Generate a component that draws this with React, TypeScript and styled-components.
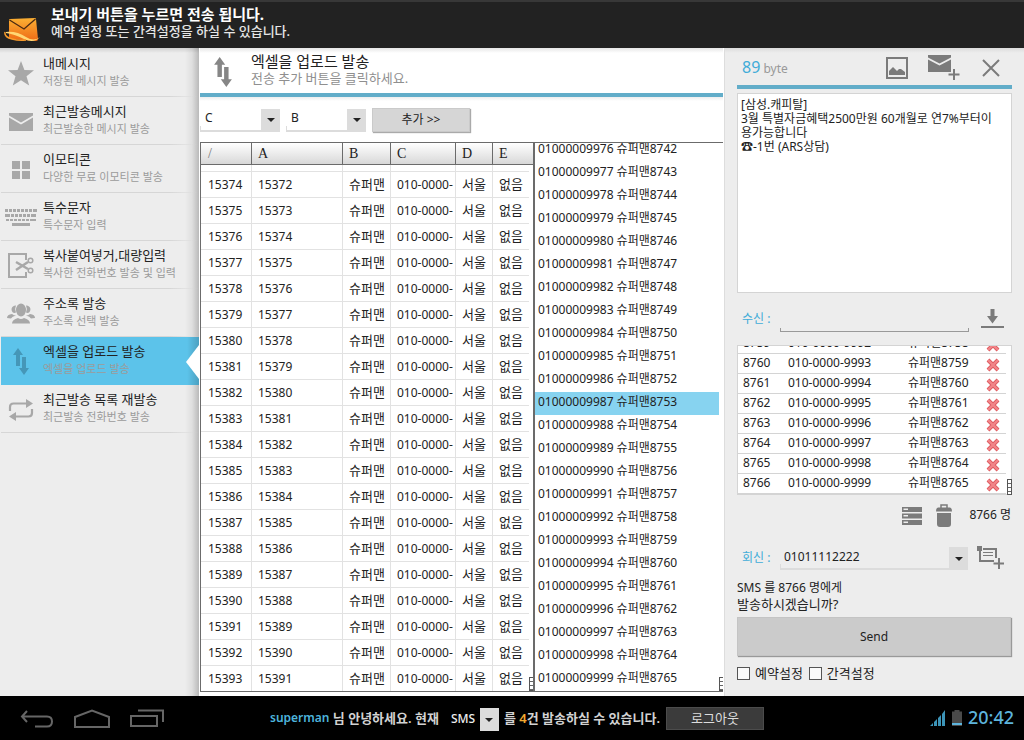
import React from 'react';
import styled, { createGlobalStyle, css } from 'styled-components';

const GlobalStyle = createGlobalStyle`
  * { box-sizing: border-box; }
  html, body { margin: 0; }
  body, button, input, select, textarea {
    font-family: "Noto Sans", "Noto Sans CJK KR", sans-serif;
    font-size: 12px;
    color: #222;
  }
  button { border: 0; padding: 0; background: none; cursor: pointer; }
  svg { display: block; flex: none; }
`;

const accent = '#62adc9';
const blueText = '#41acd8';
const iconGray = '#7b7b7b';

const Screen = styled.div`
  display: flex;
  flex-direction: column;
  min-height: 100vh;
  background: #ededed;
`;

const TopBar = styled.header`
  display: flex;
  align-items: center;
  gap: 10px;
  height: 48px;
  padding: 0 4px;
  background: #222;
  border-top: 2px solid #383838;
  color: #fff;
`;

const TopLogo = styled.span`
  padding-top: 10px;
`;

const TopTitle = styled.h1`
  margin: 0;
  font-size: 15px;
  line-height: 18px;
  font-weight: 700;
`;

const TopSubtitle = styled.p`
  margin: 0;
  padding-bottom: 6px;
  font-size: 13px;
  line-height: 16px;
  font-weight: 500;
  color: #e6e6e6;
`;

const Body = styled.div`
  display: flex;
  flex: 1;
`;

const Sidebar = styled.nav`
  flex: 0 0 199px;
  padding: 1px 0 0 1px;
  background:
    linear-gradient(to right, transparent, rgba(0, 0, 0, 0.06) 50%, rgba(0, 0, 0, 0.22)) right / 14px 100% no-repeat,
    linear-gradient(to bottom, rgba(0, 0, 0, 0.12), transparent) top / 100% 5px no-repeat,
    #ededed;
`;

const MenuItem = styled.a<{ $active?: boolean }>`
  position: relative;
  display: flex;
  align-items: center;
  height: 48px;
  padding-bottom: 1px;
  background: linear-gradient(to right, #d6d6d6 85%, transparent) left bottom / 100% 1px no-repeat;
  text-decoration: none;
  color: #222;
  ${(p) =>
    p.$active &&
    css`
      background: linear-gradient(to right, transparent, rgba(0, 0, 0, 0.18)) right / 12px 100% no-repeat, #5cc3ea;
      &::after {
        content: '';
        position: absolute;
        right: 0;
        top: 8px;
        border: 17px solid transparent;
        border-left-width: 0;
        border-right: 13px solid #fff;
      }
    `}
`;

const MenuIcon = styled.span<{ $active?: boolean }>`
  display: flex;
  justify-content: center;
  width: 40px;
  padding-top: 2px;
  margin-right: 2px;
  color: ${(p) => (p.$active ? '#4597b8' : '#a8a8a8')};
`;

const MenuTitle = styled.div`
  font-size: 13px;
  line-height: 17px;
`;

const MenuNote = styled.div`
  padding-bottom: 2px;
  font-size: 11px;
  line-height: 17px;
  color: #9b9b9b;
`;

const Main = styled.main`
  flex: 1;
  min-width: 0;
  padding: 0 1px 4px;
  background: #fff;
  border-right: 1px solid #ddd;
`;

const MainHead = styled.div`
  display: flex;
  gap: 19px;
  height: 49px;
  padding-left: 14px;
  border-bottom: 4px solid ${accent};
  background: linear-gradient(to bottom, #e6e6e6, #fff 5px);
`;

const MainIcon = styled.span`
  padding-top: 9px;
  color: #868686;
`;

const MainTitle = styled.h2`
  margin: 0;
  padding-top: 4px;
  font-size: 15px;
  line-height: 18px;
  font-weight: 400;
`;

const MainNote = styled.p`
  margin: 0;
  font-size: 13px;
  line-height: 17px;
  color: #8f8f8f;
`;

const Controls = styled.div`
  display: flex;
  align-items: center;
  gap: 6px;
  height: 45px;
  background: linear-gradient(to bottom, #eee, #fff 4px);
`;

const SelectBox = styled.span<{ $dark?: boolean; $wide?: boolean }>`
  position: relative;
  display: block;
  width: ${(p) => (p.$dark ? '48px' : '80px')};
  ${(p) =>
    p.$wide &&
    css`
      width: auto;
      flex: 1;
    `}
  height: 24px;

  select {
    display: block;
    width: 100%;
    height: 24px;
    padding: 0 20px 2px ${(p) => (p.$dark ? '0' : p.$wide ? '4px' : '5px')};
    appearance: none;
    border: 0;
    border-radius: 0;
    border-bottom: ${(p) => (p.$dark ? '0' : '2px solid #dcdcdc')};
    background: ${(p) => (p.$dark ? 'none' : 'linear-gradient(#dcdcdc, #dcdcdc) left bottom / 1px 4px no-repeat')};
    color: ${(p) => (p.$dark ? '#eee' : '#222')};
    font-weight: ${(p) => (p.$dark ? 500 : 400)};
    outline: none;
  }
`;

const SelectArrow = styled.span`
  position: absolute;
  right: 0;
  top: 1px;
  bottom: 0;
  display: flex;
  align-items: center;
  justify-content: center;
  width: 19px;
  background: #dcdcdc;
  pointer-events: none;
  &::after {
    content: '';
    border: 4px solid transparent;
    border-top-color: #222;
    border-bottom-width: 0;
  }
`;

const AddButton = styled.button`
  width: 98px;
  height: 24px;
  padding-bottom: 2px;
  background: #d6d6d6;
  border: 1px solid #cacaca;
  box-shadow: 1px 1px 1px #aaa;
`;

const Panes = styled.div`
  display: flex;
  height: 550px;
  border: 1px solid #6b6b6b;
  border-right: 0;
`;

const SheetPane = styled.div`
  position: relative;
  flex: 0 0 334px;
  overflow: hidden;
  border-right: 2px solid #6b6b6b;
`;

const Sheet = styled.table`
  width: 332px;
  table-layout: fixed;
  border-collapse: separate;
  border-spacing: 0;

  th {
    height: 22px;
    padding: 0 0 0 6px;
    text-align: left;
    font-family: "Liberation Serif", serif;
    font-size: 14px;
    font-weight: 400;
    line-height: 16px;
    background: linear-gradient(to bottom, #fff, #d8d8d8);
    border-right: 1px solid #6b6b6b;
    border-bottom: 1px solid #6b6b6b;
  }
  th:last-child { border-right: 0; }
  td {
    height: 26px;
    padding: 0 0 0 6px;
    overflow: hidden;
    white-space: nowrap;
    line-height: 16px;
    border-right: 1px solid #e2e2e2;
    border-bottom: 1px solid #e2e2e2;
  }
  th:first-child, td:first-child { padding-left: 7px; }
  th:first-child { color: #777; }
  td:last-child { border-right: 0; }
`;

const GapRow = styled.tr`
  && td { height: 7px; line-height: 1px; }
`;

const HangulCell = styled.td`
  && { padding-bottom: 2px; }
  font-size: 13px;
`;

const Track = styled.span`
  position: absolute;
  top: 22px;
  right: 0;
  bottom: 0;
  width: 4px;
  background: #fff;
`;

const PickPane = styled.div`
  position: relative;
  display: flex;
  flex: 1;
  flex-direction: column;
  justify-content: flex-end;
  overflow: hidden;
`;

const PickList = styled.ul`
  margin: 0;
  padding: 0 4px 0 0;
  list-style: none;
`;

const PickRow = styled.li<{ $on?: boolean }>`
  height: 23px;
  padding-left: 3px;
  line-height: 20px;
  white-space: nowrap;
  background: ${(p) => (p.$on ? '#87d3f0' : 'transparent')};
`;

const Grip = styled.span`
  position: absolute;
  right: 0;
  bottom: 0;
  width: 4px;
  height: 14px;
  border: 1px solid #555;
  border-right: 0;
  background: repeating-linear-gradient(to bottom, #fff 0 3px, #666 3px 4px);
`;

const Compose = styled.aside`
  display: flex;
  flex: 0 0 299px;
  flex-direction: column;
  padding: 0 12px;
  background: linear-gradient(to bottom, #dcdcdc, #ededed 5px);
`;

const ComposeHead = styled.div`
  display: flex;
  align-items: center;
  height: 41px;
  padding: 2px 12px 0 5px;
  border-bottom: 4px solid ${accent};
  color: ${iconGray};
`;

const ByteCount = styled.div`
  flex: 1;
  font-size: 12px;
  line-height: 24px;
  color: #999;
  strong {
    font-size: 16px;
    font-weight: 400;
    color: ${blueText};
  }
`;

const IconButton = styled.button<{ $gap?: number }>`
  margin-left: ${(p) => p.$gap ?? 0}px;
  color: ${iconGray};
`;

const Message = styled.textarea`
  display: block;
  width: 100%;
  height: 200px;
  margin-top: 4px;
  padding: 4px 0 0 3px;
  border: 1px solid #d4d4d4;
  border-radius: 0;
  background: #fff;
  line-height: 14px;
  white-space: pre-wrap;
  resize: none;
  overflow: hidden;
  outline: none;
`;

const FieldRow = styled.div<{ $tall?: boolean }>`
  display: flex;
  align-items: center;
  height: ${(p) => (p.$tall ? '52px' : '24px')};
  padding: 0 8px 0 5px;
`;

const FieldLabel = styled.label`
  flex: 0 0 38px;
  padding-bottom: 2px;
  font-size: 12px;
  color: ${blueText};
`;

const PhoneInput = styled.input`
  flex: 1;
  min-width: 0;
  height: 20px;
  margin-top: 6px;
  padding: 0 4px;
  border: 0;
  border-bottom: 1px solid #999;
  outline: none;
  background:
    linear-gradient(#999, #999) left bottom / 1px 3px no-repeat,
    linear-gradient(#999, #999) right bottom / 1px 3px no-repeat;
`;

const Recipients = styled.div`
  position: relative;
`;

const RecipientClip = styled.div`
  display: flex;
  flex-direction: column;
  justify-content: flex-end;
  height: 150px;
  overflow: hidden;
  border: 1px solid #d4d4d4;
  background: #fff;
`;

const RecipientTable = styled.table`
  flex: none;
  width: calc(100% - 5px);
  table-layout: fixed;
  border-collapse: separate;
  border-spacing: 0;
  td {
    height: 20px;
    padding: 0 0 2px 5px;
    line-height: 16px;
    white-space: nowrap;
    border-bottom: 1px solid #d4d4d4;
  }
  td:last-child { padding: 3px 0 0 2px; }
  button { display: block; }
`;

const RecipientGrip = styled(Grip)`
  width: 5px;
  height: 16px;
  border-right: 1px solid #555;
`;

const Actions = styled.div`
  display: flex;
  align-items: center;
  justify-content: flex-end;
  gap: 14px;
  height: 41px;
  margin-bottom: 10px;
`;

const Count = styled.span`
  padding: 0 1px 2px 3px;
  line-height: 16px;
`;

const Ask = styled.p`
  margin: 10px 0 5px;
  line-height: 16px;
`;

const AskLine = styled.span<{ $large?: boolean }>`
  display: block;
  font-size: ${(p) => (p.$large ? '13px' : '12px')};
`;

const SendButton = styled.button`
  height: 39px;
  margin-right: 1px;
  background: #cbcbcb;
  border: 1px solid #c4c4c4;
  box-shadow: 1px 1px 1px #999;
`;

const Options = styled.div`
  display: flex;
  gap: 6px;
  padding-top: 9px;
`;

const Option = styled.label`
  display: flex;
  align-items: center;
  gap: 5px;
  font-size: 13px;
  line-height: 16px;
  input {
    appearance: none;
    width: 13px;
    height: 13px;
    margin: 0;
    border: 1px solid #555;
    background: #fafafa;
  }
`;

const Footer = styled.footer`
  display: grid;
  grid-template-columns: 1fr auto 1fr;
  align-items: center;
  height: 44px;
  padding: 0 10px 0 20px;
  background: #000;
`;

const NavButtons = styled.div`
  display: flex;
  gap: 20px;
  button { color: #666; }
`;

const Greeting = styled.div`
  display: flex;
  align-items: center;
  font-size: 13px;
  font-weight: 600;
  line-height: 20px;
  color: #d2d2d2;
  white-space: pre;
`;

const UserName = styled.span`
  font-size: 12px;
  color: #4db4dc;
`;

const Quota = styled.span`
  color: #f0a830;
`;

const GreetingSelect = styled.span`
  margin: 2px 5px 0 12px;
`;

const LogoutButton = styled.button`
  width: 98px;
  height: 23px;
  margin-left: 6px;
  background: #3b3b3b;
  border: 1px solid #4c4c4c;
  font-size: 13px;
  line-height: 18px;
  color: #ddd;
`;

const Status = styled.div`
  display: flex;
  align-items: center;
  justify-content: flex-end;
  gap: 6px;
`;

const Clock = styled.time`
  padding-bottom: 2px;
  font-size: 18px;
  line-height: 24px;
  font-weight: 500;
  color: #5db4dc;
`;

const svg = (w: number, h: number, body: React.ReactNode) => (
  <svg width={w} height={h} viewBox={`0 0 ${w} ${h}`} fill="currentColor" aria-hidden="true">
    {body}
  </svg>
);

const Logo = () => (
  <svg width="37" height="27" viewBox="0 0 37 27" aria-hidden="true">
    <defs>
      <linearGradient id="envelope" x1="0" y1="0" x2="0" y2="1">
        <stop offset="0" stopColor="#fbb033" />
        <stop offset="1" stopColor="#ee6a16" />
      </linearGradient>
    </defs>
    <path d="M5 3 Q5 2 6 2 L31 1 Q32 1 32 2 L34 22 Q34 24 32 24 L7 22 Q5 22 5 20Z" fill="url(#envelope)" />
    <path d="M5.500 3 L20 12 L31.500 2" fill="none" stroke="#4a2a12" strokeWidth="1.300" />
    <path d="M2 15 Q13 14 22 20 Q30 25 36 20 Q30 27 20 22 Q10 17 2 16Z" fill="#ffd774" />
    <path d="M1 15 Q0 20 8 22 Q15 24 22 23" fill="none" stroke="#f79a2a" strokeWidth="1.500" />
  </svg>
);

const Star = () =>
  svg(26, 25, <path d="M13 0 L16.400 9 L26 9.300 L18.500 15.300 L21.200 24.500 L13 19.200 L4.800 24.500 L7.500 15.300 L0 9.300 L9.600 9Z" />);

const Envelope = () =>
  svg(24, 18, <><path d="M0 0H24V2.500L12 9.500L0 2.500Z" /><path d="M0 4.500L12 11.500L24 4.500V18H0Z" /></>);

const Tiles = () =>
  svg(18, 18, <><path d="M0 0h8v8H0zM10 0h8v8h-8zM0 10h8v8H0zM10 10h8v8h-8z" /></>);

const Keys = () =>
  svg(
    32,
    18,
    <>
      {[0, 1, 2, 3, 4, 5, 6].map((i) => <rect key={`a${i}`} x={i * 4} y="0" width="3" height="3" />)}
      <rect x="28" y="0" width="4" height="3" />
      <rect x="0" y="5" width="5" height="3" />
      {[0, 1, 2, 3, 4].map((i) => <rect key={`b${i}`} x={6 + i * 4} y="5" width="3" height="3" />)}
      <rect x="26" y="5" width="5" height="3" />
      {[0, 1, 2, 3, 4, 5, 6].map((i) => <rect key={`c${i}`} x={1 + i * 4} y="10" width="3" height="2" />)}
      <rect x="28" y="10" width="3" height="2" />
      <rect x="7" y="14" width="18" height="3" />
    </>,
  );

const Scissors = () =>
  svg(
    26,
    26,
    <g fill="none" stroke="currentColor">
      <path d="M18 7V1H1V24H18V19" strokeWidth="2" />
      <path d="M8 9L20 16M8 17L20 9" strokeWidth="2.500" />
      <circle cx="22.500" cy="7.500" r="2.300" strokeWidth="1.500" />
      <circle cx="22.500" cy="17.500" r="2.300" strokeWidth="1.500" />
    </g>,
  );

const Group = () =>
  svg(
    28,
    22,
    <>
      <path d="M6 3.500a4 4 0 0 1 3-1 8 8 0 0 0 0 7c-4 2-6-4-3-6zM22 3.500a4 4 0 0 0-3-1 8 8 0 0 1 0 7c4 2 6-4 3-6z" />
      <ellipse cx="14" cy="7" rx="5" ry="6.500" />
      <path d="M5 20.500q0-4 6-5.500q3 2 6 0q6 1.500 6 5.500zM0 15q0-3.500 5-4q2 1.500 4 1.500q-4 1-5 3zM28 15q0-3.500-5-4q-2 1.500-4 1.500q4 1 5 3z" />
    </>,
  );

const UpDown = ({ size = 'small' }: { size?: 'small' | 'large' }) => {
  const large = size === 'large';
  return (
    <svg width={large ? 18 : 16} height={large ? 30 : 27} viewBox="0 0 16 27" fill="currentColor" aria-hidden="true">
      <path d="M5 0L10 7H7V18H3V7H0ZM9 9H13V20H16L11 27L6 20H9Z" />
    </svg>
  );
};

const Repeat = () =>
  svg(
    26,
    22,
    <>
      <path d="M2 12V8Q2 4.500 5.500 4.500H19M24 10V14Q24 17.500 20.500 17.500H7" fill="none" stroke="currentColor" strokeWidth="2.200" />
      <path d="M18 0L25 4.500L18 9ZM8 13L1 17.500L8 22Z" />
    </>,
  );

const Picture = () =>
  svg(
    22,
    22,
    <>
      <rect x="1" y="1" width="20" height="20" fill="none" stroke="currentColor" strokeWidth="2" />
      <path d="M3 18V14L7 10L11 14L13 12H15L19 15V18Z" />
    </>,
  );

const MailPlus = () =>
  svg(
    32,
    27,
    <>
      <path d="M0 1H23V3.500L11.500 9.500L0 3.500Z" />
      <path d="M0 5.500L11.500 11.500L23 5.500V18H0Z" />
      <path d="M26 15V26M20.500 20.500H31.500" stroke="currentColor" strokeWidth="2" />
    </>,
  );

const Cross = () => svg(18, 18, <path d="M1 1L17 17M17 1L1 17" stroke="currentColor" strokeWidth="2" />);

const Download = () => svg(23, 20, <path d="M9.500 0H13.500V7H17L11.500 14.500L6 7H9.500ZM0 17H23V19H0Z" />);

const RedX = () => (
  <svg width="14" height="14" viewBox="0 0 14 14" aria-hidden="true">
    <path d="M2 2L12 12M12 2L2 12" stroke="#dd5a5e" strokeWidth="4" />
    <path d="M2 2L12 12M12 2L2 12" stroke="#f28589" strokeWidth="2.400" />
  </svg>
);

const ServerList = () =>
  svg(
    20,
    18,
    <path
      fillRule="evenodd"
      d="M0 0H20V5H0ZM1.500 1.500V3H6V1.500ZM0 6.500H20V11.500H0ZM1.500 8V9.500H6V8ZM0 13H20V18H0ZM1.500 14.500V16H6V14.500Z"
    />,
  );

const Trash = () =>
  svg(
    16,
    23,
    <>
      <path d="M5 4V1H11V4" fill="none" stroke="currentColor" strokeWidth="1.500" />
      <path d="M2 3.500H14Q16 4 16 7.500H0Q0 4 2 3.500ZM1 9H15V20Q15 23 12 23H4Q1 23 1 20Z" />
    </>,
  );

const NotePlus = () =>
  svg(
    27,
    24,
    <>
      <rect width="5" height="5" />
      <path d="M3 5V15H17M6 3H19V12" fill="none" stroke="currentColor" strokeWidth="2" />
      <path d="M6 6.500H16M6 9.500H16" stroke="currentColor" strokeWidth="1" />
      <path d="M22 12V23M16.500 17.500H27" stroke="currentColor" strokeWidth="2" />
    </>,
  );

const BackIcon = () =>
  svg(
    34,
    19,
    <path d="M7 2L2 7.500L7 13M2 7.500H27Q32 7.500 32 12.500Q32 17.500 27 17.500H15" fill="none" stroke="currentColor" strokeWidth="2" />,
  );

const HomeIcon = () =>
  svg(36, 19, <path d="M1 18V8L18 1.500L35 8V18Z" fill="none" stroke="currentColor" strokeWidth="2" />);

const RecentIcon = () =>
  svg(34, 18, <path d="M1 7H27V17H1ZM8 1.500H33V13" fill="none" stroke="currentColor" strokeWidth="2" />);

const Signal = () => (
  <svg width="16" height="16" viewBox="0 0 16 16" fill="#3c94b8" aria-hidden="true">
    <path d="M0 16L3 13V16ZM4 12L7 9V16H4ZM8 8L11 5V16H8ZM12 4L15 0V16H12Z" />
  </svg>
);

const Battery = () => (
  <svg width="10" height="16" viewBox="0 0 10 16" aria-hidden="true">
    <path d="M2.500 0H7.500V1.500H10V16H0V1.500H2.500Z" fill="#4a4a4a" />
    <rect y="13" width="10" height="2" fill="#5db4dc" />
  </svg>
);

const menu = [
  { icon: <Star />, title: '내메시지', note: '저장된 메시지 발송' },
  { icon: <Envelope />, title: '최근발송메시지', note: '최근발송한 메시지 발송' },
  { icon: <Tiles />, title: '이모티콘', note: '다양한 무료 이모티콘 발송' },
  { icon: <Keys />, title: '특수문자', note: '특수문자 입력' },
  { icon: <Scissors />, title: '복사붙여넣거,대량입력', note: '복사한 전화번호 발송 및 입력' },
  { icon: <Group />, title: '주소록 발송', note: '주소록 선택 발송' },
  { icon: <UpDown />, title: '엑셀을 업로드 발송', note: '엑셀을 업로드 발송', active: true },
  { icon: <Repeat />, title: '최근발송 목록 재발송', note: '최근발송 전화번호 발송' },
];

const range = (from: number, to: number) => Array.from({ length: to - from + 1 }, (_, i) => from + i);

const message = '[삼성.캐피탈]\n3월 특별자금혜택2500만원 60개월로 연7%부터이\n용가능합니다\n☎-1번 (ARS상담)';

export default function App() {
  return (
    <>
      <GlobalStyle />
      <Screen>
        <TopBar>
          <TopLogo><Logo /></TopLogo>
          <div>
            <TopTitle>보내기 버튼을 누르면 전송 됩니다.</TopTitle>
            <TopSubtitle>예약 설정 또는 간격설정을 하실 수 있습니다.</TopSubtitle>
          </div>
        </TopBar>

        <Body>
          <Sidebar>
            {menu.map((m) => (
              <MenuItem key={m.title} href="#" $active={m.active}>
                <MenuIcon $active={m.active}>{m.icon}</MenuIcon>
                <div>
                  <MenuTitle>{m.title}</MenuTitle>
                  <MenuNote>{m.note}</MenuNote>
                </div>
              </MenuItem>
            ))}
          </Sidebar>

          <Main>
            <MainHead>
              <MainIcon><UpDown size="large" /></MainIcon>
              <div>
                <MainTitle>엑셀을 업로드 발송</MainTitle>
                <MainNote>전송 추가 버튼을 클릭하세요.</MainNote>
              </div>
            </MainHead>
            <Controls>
              <SelectBox>
                <select aria-label="전화번호 열"><option>C</option></select>
                <SelectArrow />
              </SelectBox>
              <SelectBox>
                <select aria-label="이름 열"><option>B</option></select>
                <SelectArrow />
              </SelectBox>
              <AddButton type="button">추가 &gt;&gt;</AddButton>
            </Controls>
            <Panes>
              <SheetPane>
                <Sheet>
                  <colgroup>
                    <col width="51" />
                    <col width="91" />
                    <col width="48" />
                    <col width="65" />
                    <col width="37" />
                    <col width="40" />
                  </colgroup>
                  <thead>
                    <tr>{['/', 'A', 'B', 'C', 'D', 'E'].map((h) => <th key={h}>{h}</th>)}</tr>
                  </thead>
                  <tbody>
                    <GapRow><td /><td /><td /><td /><td /><td /></GapRow>
                    {range(15374, 15393).map((n) => (
                      <tr key={n}>
                        <td>{n}</td>
                        <td>{n - 2}</td>
                        <HangulCell>슈퍼맨</HangulCell>
                        <td>010-0000-</td>
                        <HangulCell>서울</HangulCell>
                        <HangulCell>없음</HangulCell>
                      </tr>
                    ))}
                  </tbody>
                </Sheet>
                <Track><Grip /></Track>
              </SheetPane>
              <PickPane>
                <PickList>
                  {range(9976, 9999).map((n) => (
                    <PickRow key={n} $on={n === 9987}>{`0100000${n} 슈퍼맨${n - 1234}`}</PickRow>
                  ))}
                </PickList>
                <Grip />
              </PickPane>
            </Panes>
          </Main>

          <Compose>
            <ComposeHead>
              <ByteCount><strong>89</strong> byte</ByteCount>
              <IconButton type="button" aria-label="사진"><Picture /></IconButton>
              <IconButton type="button" aria-label="메시지 추가" $gap={20}><MailPlus /></IconButton>
              <IconButton type="button" aria-label="닫기" $gap={22}><Cross /></IconButton>
            </ComposeHead>
            <Message aria-label="메시지" defaultValue={message} spellCheck={false} />
            <FieldRow $tall>
              <FieldLabel htmlFor="to">수신 :</FieldLabel>
              <PhoneInput id="to" type="tel" />
              <IconButton type="button" aria-label="받는 사람 추가" $gap={12}><Download /></IconButton>
            </FieldRow>
            <Recipients>
              <RecipientClip>
                <RecipientTable>
                  <colgroup>
                    <col width="45" />
                    <col width="120" />
                    <col />
                    <col width="22" />
                  </colgroup>
                  <tbody>
                    {range(8759, 8766).map((n) => (
                      <tr key={n}>
                        <td>{n}</td>
                        <td>{`010-0000-${n + 1233}`}</td>
                        <td>{`슈퍼맨${n - 1}`}</td>
                        <td>
                          <IconButton type="button" aria-label="삭제"><RedX /></IconButton>
                        </td>
                      </tr>
                    ))}
                  </tbody>
                </RecipientTable>
              </RecipientClip>
              <RecipientGrip />
            </Recipients>
            <Actions>
              <IconButton type="button" aria-label="목록"><ServerList /></IconButton>
              <IconButton type="button" aria-label="모두 삭제"><Trash /></IconButton>
              <Count>8766 명</Count>
            </Actions>
            <FieldRow>
              <FieldLabel htmlFor="from">회신 :</FieldLabel>
              <SelectBox $wide>
                <select id="from"><option>01011112222</option></select>
                <SelectArrow />
              </SelectBox>
              <IconButton type="button" aria-label="회신번호 추가" $gap={9}><NotePlus /></IconButton>
            </FieldRow>
            <Ask>
              <AskLine>SMS 를 8766 명에게</AskLine>
              <AskLine $large>발송하시겠습니까?</AskLine>
            </Ask>
            <SendButton type="button">Send</SendButton>
            <Options>
              <Option><input type="checkbox" />예약설정</Option>
              <Option><input type="checkbox" />간격설정</Option>
            </Options>
          </Compose>
        </Body>

        <Footer>
          <NavButtons>
            <button type="button" aria-label="뒤로"><BackIcon /></button>
            <button type="button" aria-label="홈"><HomeIcon /></button>
            <button type="button" aria-label="최근 앱"><RecentIcon /></button>
          </NavButtons>
          <Greeting>
            <UserName>superman</UserName>
            <span> 님 안녕하세요. 현재</span>
            <GreetingSelect>
              <SelectBox $dark>
                <select aria-label="종류"><option>SMS</option></select>
                <SelectArrow />
              </SelectBox>
            </GreetingSelect>
            <span>를 <Quota>4</Quota>건 발송하실 수 있습니다.</span>
            <LogoutButton type="button">로그아웃</LogoutButton>
          </Greeting>
          <Status>
            <Signal />
            <Battery />
            <Clock>20:42</Clock>
          </Status>
        </Footer>
      </Screen>
    </>
  );
}
